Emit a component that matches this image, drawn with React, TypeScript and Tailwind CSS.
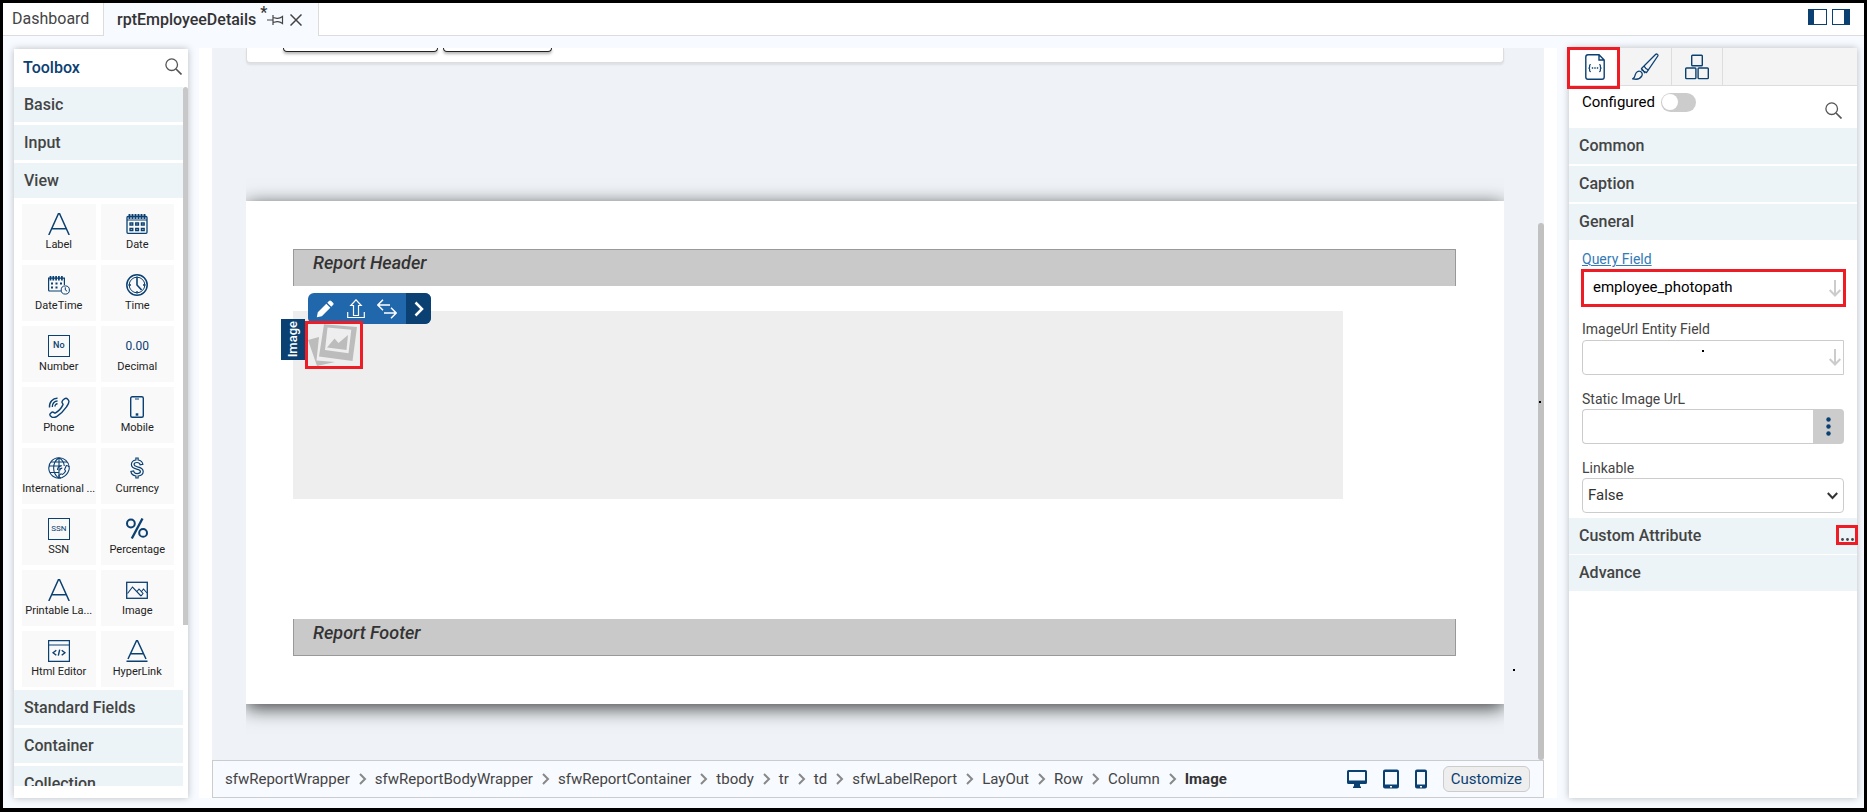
import { useState } from 'react'
import type { ReactNode } from 'react'

type Tool = { name: string; icon: ReactNode }

const svg = {
  width: 22,
  height: 22,
  viewBox: '0 0 22 22',
  fill: 'none',
  stroke: 'currentColor',
  strokeWidth: 1.3,
}

const LetterIcon = ({ underline = false }: { underline?: boolean }) => (
  <svg {...svg} strokeWidth={1.5}>
    {underline ? (
      <path d="M2 19 10.5.8h1L20 19M5 13.8h12M.5 21.3h21" />
    ) : (
      <path d="M.8 22 10.4.8h1.2L21.2 22M4 15.7h14" />
    )}
  </svg>
)

const DateIcon = () => (
  <svg {...svg}>
    <rect x="1" y="3.5" width="20" height="16.8" rx="1" />
    <path d="M1 7h20" strokeWidth="1" />
    <path d="M3.5 1v5M6.5 1v5M9.5 1v5M12.5 1v5M15.5 1v5M18.5 1v5" strokeWidth="1.9" />
    <path d="M4 10h2.8v2H4zM9.7 10h2.8v2H9.7zM15.4 10h2.8v2h-2.8zM4 15.5h2.8v2H4zM9.7 15.5h2.8v2H9.7zM15.4 15.5h2.8v2h-2.8z" />
  </svg>
)

const DateTimeIcon = () => (
  <svg {...svg} strokeWidth={1.2}>
    <path d="M13 17H1.6a1 1 0 0 1-1-1V4.2h15.8V11" />
    <path d="M2.5 2v4.4M5.3 2v4.4M8.1 2v4.4M10.9 2v4.4M13.9 2v4.4" strokeWidth="1.7" />
    <path d="M3 9.5h2M7.5 9.5h2M12 9.5h2M3 13.5h2M7.5 13.5h2" strokeWidth="2.2" />
    <circle cx="17.3" cy="16" r="4.1" strokeWidth="1" />
    <path d="M17.3 13.3V16l1.8 1.2" strokeWidth="1" />
  </svg>
)

const TimeIcon = () => (
  <svg {...svg}>
    <circle cx="11" cy="11" r="10.2" strokeWidth="1.5" />
    <circle cx="11" cy="11" r="7.8" strokeWidth="1" />
    <path d="M11 4.5V11l4.6 5" strokeWidth="1.6" />
    <path d="M11 2.5V5M11 17v2.5M2.5 11H5M17 11h2.5" />
  </svg>
)

const PhoneIcon = () => (
  <svg {...svg} strokeWidth={1.4}>
    <path d="M16.2 3 18 2.2c1 0 2.6 1.8 2.9 3 .3 2-1 3.600-2.400 5.600-2.500 3.500-5.500 7-9.500 9.500C7 21.500 5.500 22 4 21.200c-1-.6-2.300-1.600-2.200-2.600.1-1 1.900-2.600 2.900-2.600 1 0 1.700 1.300 2.500 1.100 3-1.700 6.200-5 7.800-8.500C15.300 7.700 13.800 7 14 6c.1-1 1.200-2.400 2.200-3z" />
    <path d="M1.500 11.500C1 6 5 2 9.500 2.200M4.300 11C4 7.500 6.500 5 9.500 5M7 10.500C6.800 9 8 7.900 9.500 7.800" />
  </svg>
)

const MobileIcon = () => (
  <svg {...svg} strokeWidth={1.4}>
    <rect x="4.700" y=".7" width="12.600" height="20.600" rx="1.500" />
    <path d="M9 3h4" strokeWidth="1" />
    <path d="M9.700 18.500h2.600" strokeWidth="2.400" />
  </svg>
)

const GlobeIcon = () => (
  <svg {...svg} strokeWidth={1.1}>
    <path d="M11 .8a10.200 10.200 0 1 0 2 20.200M11 .8A10.200 10.200 0 0 1 21.200 10" />
    <path d="M10.500 1C4 6 4 16 10.500 21M11.500 1c3 2 4.600 5 4.800 8M11 1v20M1 9h12M3 5h16M2 15.500h9" />
    <path d="M18.300 8.500c2.700 0 3.400 2 2.700 4.300-1 3.200-3.600 6.200-6.800 7.700-1.700.700-3.200-.2-3.400-1.800l2.200-1.900 1.600.6c1.400-.9 2.400-2 3-3.400l-1-1.500z" />
    <path d="M9.500 13c0-2.600 1.800-4.300 4.500-4.300M11.800 13.600c0-1.500 1-2.400 2.500-2.500" />
  </svg>
)

const CurrencyIcon = () => (
  <svg {...svg} strokeWidth={1.2}>
    <path d="M9.900 1h2.200v2c2.500.3 4.300 1.800 4.800 4.300l-2.700.5c-.4-1.500-1.500-2.300-3.200-2.300-1.800 0-2.900.8-2.900 2 0 1.300 1.200 1.700 3.500 2.300 3.500.8 5.600 2 5.600 4.700 0 2.400-2 4.100-5.100 4.500v2H9.900v-2c-2.800-.4-4.700-2-5-4.600l2.700-.4c.3 1.700 1.600 2.600 3.500 2.600s3.300-.7 3.300-2c0-1.400-1.300-1.800-3.800-2.400-3.200-.8-5.200-1.900-5.200-4.600 0-2.300 1.800-4.200 4.500-4.600z" />
  </svg>
)

const PercentIcon = () => (
  <svg {...svg} strokeWidth={2}>
    <circle cx="4.900" cy="5.500" r="3.900" />
    <circle cx="17.100" cy="14.900" r="3.900" />
    <path d="M16.500.5 5.800 20.500" strokeWidth="2.300" />
  </svg>
)

const ImageIcon = () => (
  <svg {...svg}>
    <rect x=".7" y="3.300" width="20.600" height="16" />
    <path d="M1.500 14.500 6.500 8l8.500 9M11 12.500l2-2.500 4 4.500-2 2.500M15.500 12.500l2-2.500 3.500 4" strokeWidth="1.100" />
  </svg>
)

const HtmlIcon = () => (
  <svg {...svg} strokeWidth={1.2}>
    <path d="M.6.6h20.800v20.800H.6zM.6 5h20.800" />
    <path d="m8.300 10.200-3.200 2.500 3.200 2.500M13.700 10.200l3.200 2.500-3.200 2.500M11.700 9.700l-1.400 6" strokeWidth="1.400" />
  </svg>
)

const Boxed = ({ children }: { children: ReactNode }) => (
  <span className="flex size-[22px] items-center justify-center border border-[#0b4072]">{children}</span>
)

const TOOLS: Tool[] = [
  { name: 'Label', icon: <LetterIcon /> },
  { name: 'Date', icon: <DateIcon /> },
  { name: 'DateTime', icon: <DateTimeIcon /> },
  { name: 'Time', icon: <TimeIcon /> },
  { name: 'Number', icon: <Boxed><span className="text-[9px] font-medium">No</span></Boxed> },
  { name: 'Decimal', icon: <span className="text-xs">0.00</span> },
  { name: 'Phone', icon: <PhoneIcon /> },
  { name: 'Mobile', icon: <MobileIcon /> },
  { name: 'International ...', icon: <GlobeIcon /> },
  { name: 'Currency', icon: <CurrencyIcon /> },
  { name: 'SSN', icon: <Boxed><span className="text-[8px]">SSN</span></Boxed> },
  { name: 'Percentage', icon: <PercentIcon /> },
  { name: 'Printable La...', icon: <LetterIcon /> },
  { name: 'Image', icon: <ImageIcon /> },
  { name: 'Html Editor', icon: <HtmlIcon /> },
  { name: 'HyperLink', icon: <LetterIcon underline /> },
]

const CRUMBS = ['sfwReportWrapper', 'sfwReportBodyWrapper', 'sfwReportContainer', 'tbody', 'tr', 'td', 'sfwLabelReport', 'LayOut', 'Row', 'Column', 'Image']

const SearchIcon = () => (
  <svg width="17" height="17" viewBox="0 0 17 17" fill="none" stroke="#555" strokeWidth="1.300">
    <circle cx="6.700" cy="6.700" r="5.800" />
    <path d="m11 11 5.500 5.500" strokeWidth="1.700" />
  </svg>
)

const DownArrow = () => (
  <svg width="12" height="17" viewBox="0 0 12 17" fill="none" stroke="#ccc" strokeWidth="2">
    <path d="M6 0v15.500M.7 10 6 15.500 11.300 10" />
  </svg>
)

function Section({ title, tall = false }: { title: string; tall?: boolean }) {
  return (
    <button className={(tall ? 'h-9' : 'h-[35px]') + ' block w-full shrink-0 bg-[#ecf4f8] px-[10px] text-left text-base font-medium text-[#444]'}>
      {title}
    </button>
  )
}

function TabBar() {
  return (
    <nav className="flex h-[33px] shrink-0 text-base">
      <a href="#dashboard" className="flex w-[101px] items-center border-b border-r border-[#dcdcdc] bg-white pl-[9px] text-[#444]">
        Dashboard
      </a>
      <div className="flex w-[214px] items-center pl-[13px] font-medium text-[#333]">
        <span>rptEmployeeDetails</span>
        <span className="ml-1 self-start leading-5">*</span>
        <button aria-label="Pin tab">
          <svg width="17" height="12" viewBox="0 0 17 12" fill="none" stroke="#444" strokeWidth="1.200">
            <path d="M0 6h6M6 1v10M6 3.500l4 .8c2 .2 3.500-.3 5.500-1.800v7c-2-1.500-3.500-2-5.500-1.800l-4 .8" />
          </svg>
        </button>
        <button aria-label="Close tab" className="ml-[6px]">
          <svg width="12" height="12" viewBox="0 0 12 12" stroke="#444" strokeWidth="1.500">
            <path d="m.5.5 11 11M11.500.5l-11 11" />
          </svg>
        </button>
      </div>
      <div className="flex flex-1 items-start justify-end gap-[5px] border-b border-l border-[#dcdcdc] bg-white pr-[14px] pt-[6px]">
        <button aria-label="Toggle left panel" className="h-4 w-[19px] border border-l-[6px] border-[#0b4072]" />
        <button aria-label="Toggle right panel" className="h-4 w-[18px] border border-r-[6px] border-[#0b4072]" />
      </div>
    </nav>
  )
}

function Toolbox() {
  return (
    <aside className="mt-px flex w-[174px] shrink-0 flex-col bg-white pb-3 shadow-[0_0_7px_rgba(0,0,0,0.25)]">
      <div className="flex h-[38px] shrink-0 items-center justify-between pl-[9px] pr-[6px]">
        <h2 className="text-base font-medium text-[#0b4072]">Toolbox</h2>
        <button aria-label="Search toolbox" className="pb-[3px]"><SearchIcon /></button>
      </div>
      <div className="flex min-h-0 flex-1">
        <div className="flex min-w-0 flex-1 flex-col gap-[3px] overflow-hidden">
          <Section title="Basic" />
          <Section title="Input" />
          <Section title="View" />
          <div className="grid shrink-0 grid-cols-2 gap-[5px] pl-2 pr-[9px] pt-[3px]">
            {TOOLS.map(tool => (
              <button key={tool.name} className="flex h-14 min-w-0 flex-col items-center bg-[#f9f9f9] pt-[9px] text-[#0b4072]">
                <span className="flex h-[22px] items-center">{tool.icon}</span>
                <span className="whitespace-nowrap text-[11px] leading-5 text-[#222]">{tool.name}</span>
              </button>
            ))}
          </div>
          <Section title="Standard Fields" />
          <Section title="Container" />
          <Section title="Collection" />
        </div>
        <div className="w-[5px]">
          <div className="h-[77%] rounded-t bg-[#c8c8c8]" />
        </div>
      </div>
    </aside>
  )
}

function SelectedImage() {
  return (
    <>
      <div className="absolute left-[15px] -top-[18px] z-10 flex h-[31px] overflow-hidden rounded-md bg-[#2167ab] text-white">
        <button aria-label="Edit" className="flex w-[34px] items-center justify-center">
          <svg width="18" height="18" viewBox="0 0 18 18" fill="currentColor">
            <path d="m.8 17.200 1-5 8.500-8.500 4 4-8.500 8.500zM11.300 2.700 13 1a1.500 1.500 0 0 1 2.200 0L17 2.800A1.500 1.500 0 0 1 17 5l-1.700 1.700z" />
          </svg>
        </button>
        <button aria-label="Move up" className="flex w-7 items-center justify-center">
          <svg width="18" height="20" viewBox="0 0 18 20" fill="none" stroke="currentColor" strokeWidth="1.200">
            <path d="M6.500 16.500V6.500H3.800L9 .8l5.200 5.700h-2.700v10zM.7 13v5.500h16.600V13" />
          </svg>
        </button>
        <button aria-label="Swap" className="flex w-9 items-center justify-center pr-[2px]">
          <svg width="20" height="20" viewBox="0 0 20 20" fill="none" stroke="currentColor" strokeWidth="1.500">
            <path d="M13 6H1M6 .8.8 6 6 11.200M7 14h12M14 8.800l5.200 5.200-5.200 5.200" />
          </svg>
        </button>
        <button aria-label="More" className="flex w-[25px] items-center justify-center bg-[#0b4072]">
          <svg width="10" height="16" viewBox="0 0 10 16" fill="none" stroke="currentColor" strokeWidth="2.500">
            <path d="m1.500 1.500 6.500 6.500-6.500 6.500" />
          </svg>
        </button>
      </div>
      <div className="absolute -left-3 top-2 flex h-[41px] w-6 items-center justify-center bg-[#0b4072]">
        <span className="rotate-180 text-[13px] font-medium text-white [writing-mode:vertical-rl]">Image</span>
      </div>
      <div className="absolute left-3 top-[10px] z-10 h-12 w-[58px] overflow-hidden border-[3px] border-[#ee1c25]">
        <svg width="50" height="42" viewBox="0 0 50 42" fill="#bcbcbc">
          <path d="m0 16 11-3-2.500 23.500L27 38 9 42z" />
          <path fillRule="evenodd" d="M16 .3 49 3l-4.500 34L11 32.500zM19.500 3.500 17 26l23.500 3.200 2.800-23.500z" />
          <path d="m19 23.500 7.500-9 4 4.500L40 11l-1.500 15z" />
        </svg>
      </div>
    </>
  )
}

function Canvas() {
  return (
    <div className="flex min-h-0 flex-1 bg-[#eff3f7]">
      <div className="flex min-w-0 flex-1 flex-col overflow-hidden px-[34px]">
        <div className="flex h-[15px] shrink-0 gap-[5px] rounded-b border border-t-0 border-[#ddd] bg-white pl-9 shadow-[0_2px_2px_rgba(0,0,0,0.08)]">
          <div className="h-1 w-[155px] rounded-b-[4px] border border-t-0 border-[#222] shadow-[0_2px_3px_rgba(0,0,0,0.3)]" />
          <div className="h-1 w-[109px] rounded-b-[4px] border border-t-0 border-[#222] shadow-[0_2px_3px_rgba(0,0,0,0.3)]" />
        </div>
        <div className="mt-[138px] flex shrink-0 flex-col bg-white pb-12 pl-[47px] pr-12 pt-12 shadow-[0_4px_18px_rgba(0,0,0,0.75)] [clip-path:inset(-30px_0)]">
          <div className="h-[37px] border border-b-0 border-[#999] bg-[#c9c9c9] pl-[19px] text-lg font-medium italic leading-[26px] text-[#333]">
            Report Header
          </div>
          <div className="relative mr-[113px] mt-[25px] h-[188px] bg-[#eee]">
            <SelectedImage />
          </div>
          <div className="mt-[120px] h-[37px] border border-t-0 border-[#999] bg-[#c9c9c9] pl-[19px] text-lg font-medium italic leading-7 text-[#333]">
            Report Footer
          </div>
        </div>
      </div>
      <div className="absolute right-[42px] top-[621px] size-[2px] bg-black" />
      <div className="absolute right-4 top-[353px] size-[2px] bg-black" />
      <div className="flex w-[6px] flex-col pt-[175px]">
        <div className="flex-1 rounded-md bg-[#c1c1c1]" />
      </div>
    </div>
  )
}

function StatusBar() {
  return (
    <footer className="flex h-[38px] shrink-0 items-center border border-[#ccc] bg-[#f7faff] pl-3 pr-[13px] text-[15px] text-[#444]">
      <ol className="flex flex-1 items-center">
        {CRUMBS.map((crumb, i) => (
          <li key={crumb} className="flex items-center">
            {i > 0 && (
              <svg className="mx-2" width="9" height="12" viewBox="0 0 9 12" fill="none" stroke="#888" strokeWidth="2">
                <path d="m2 1 5 5-5 5" />
              </svg>
            )}
            <a href={'#' + crumb} className={i === CRUMBS.length - 1 ? 'font-bold text-[#333]' : ''}>{crumb}</a>
          </li>
        ))}
      </ol>
      <div className="flex items-center gap-4 text-[#0b4072]">
        <button aria-label="Desktop">
          <svg width="20" height="20" viewBox="0 0 20 20" fill="currentColor">
            <path fillRule="evenodd" d="M1.500 1h17A1.500 1.500 0 0 1 20 2.500v11a1.500 1.500 0 0 1-1.500 1.500H13v2.500h1V19H6v-1.500h1V15H1.500A1.500 1.500 0 0 1 0 13.500v-11A1.500 1.500 0 0 1 1.500 1zM2 3v8.500h16V3z" />
          </svg>
        </button>
        <button aria-label="Tablet">
          <svg width="16" height="20" viewBox="0 0 16 20" fill="currentColor">
            <path fillRule="evenodd" d="M2 .5h12a2 2 0 0 1 2 2v15a2 2 0 0 1-2 2H2a2 2 0 0 1-2-2v-15a2 2 0 0 1 2-2zM2 3v12.500h12V3zm5 14v1.500h2V17z" />
          </svg>
        </button>
        <button aria-label="Phone">
          <svg width="12" height="20" viewBox="0 0 12 20" fill="currentColor">
            <path fillRule="evenodd" d="M2 .5h8a2 2 0 0 1 2 2v15a2 2 0 0 1-2 2H2a2 2 0 0 1-2-2v-15a2 2 0 0 1 2-2zM2 3v12.500h8V3zm3 14v1.500h2V17z" />
          </svg>
        </button>
        <button className="h-[26px] rounded-md border border-[#ccc] bg-[#eee] px-[7px] text-[15px] leading-6 text-[#0b4072]">
          Customize
        </button>
      </div>
    </footer>
  )
}

function Properties() {
  const [configured, setConfigured] = useState(false)
  const [queryField, setQueryField] = useState('employee_photopath')

  const box = 'block h-[35px] w-full border border-[#ccc] bg-white text-[15px]'
  const label = 'block text-sm leading-5 text-[#444]'

  return (
    <aside className="flex w-[288px] shrink-0 flex-col bg-white shadow-[0_0_7px_rgba(0,0,0,0.25)]">
      <div className="relative flex h-[38px] shrink-0 border-b border-[#ddd] bg-[#f4f4f4] text-[#0b4072]">
        <button aria-label="Properties" className="flex w-[51px] items-center justify-center bg-white">
          <svg width="20" height="26" viewBox="0 0 20 26" fill="none" stroke="currentColor" strokeWidth="1.400">
            <path d="M14 .8H3A2.200 2.200 0 0 0 .8 3v20A2.200 2.200 0 0 0 3 25.200h14a2.200 2.200 0 0 0 2.200-2.200V6zM14 .8V6h5.200" />
            <path d="M5.800 10.500c-1.600 0-1 1.700-1.200 2.700-.1.700-.6.900-1.100.9.500 0 1 .2 1.100.9.200 1-.4 2.700 1.200 2.700M14.200 10.500c1.600 0 1 1.700 1.200 2.700.1.700.6.900 1.100.9-.5 0-1 .2-1.100.9-.2 1 .4 2.700-1.200 2.700" strokeWidth="1.200" />
            <path d="M6.800 14h1.400M9.300 14h1.400M11.800 14h1.400" strokeWidth="1.500" />
          </svg>
        </button>
        <button aria-label="Style" className="flex w-[52px] items-center justify-center border-r border-[#ddd]">
          <svg width="27" height="27" viewBox="0 0 27 27" fill="none" stroke="currentColor" strokeWidth="1.300">
            <path d="M9.500 15.500 23.500 1.500c1-1 3-.2 2.300 1.500L14.500 19.500c-1.500-.3-4-2.500-5-4z" />
            <path d="M12 13c1 2 2.500 3.300 4.500 4M9 16.500c2 .8 3.300 2 4 3.700" />
            <path d="M8.500 18.500c1.800 1 2.200 3 1.200 4.700-1.700 3-6 3.300-9 2.600 2-.9 2.200-2.300 2.600-4.200.6-2.500 3-4.200 5.200-3.100z" />
          </svg>
        </button>
        <button aria-label="Controls" className="flex w-[51px] items-center justify-center border-r border-[#ddd]">
          <svg width="24" height="26" viewBox="0 0 24 26" fill="none" stroke="currentColor" strokeWidth="1.400">
            <rect x="6.700" y="1.200" width="10.600" height="10.600" rx=".8" />
            <rect x=".7" y="14" width="10.200" height="10.600" rx=".8" />
            <rect x="13.100" y="14" width="10.200" height="10.600" rx=".8" />
          </svg>
        </button>
        <div className="pointer-events-none absolute -left-[2px] -top-px h-[42px] w-[53px] border-[3px] border-[#ee1c25]" />
      </div>

      <div className="flex h-[42px] shrink-0 items-start justify-between pl-[13px] pr-[15px]">
        <label className="flex items-center gap-[6px] pt-[5px] text-[15px] text-black">
          Configured
          <input
            type="checkbox"
            checked={configured}
            onChange={e => setConfigured(e.target.checked)}
            className="h-[19px] w-[35px] appearance-none rounded-full bg-[#ccc] p-px before:block before:size-4 before:rounded-full before:bg-white checked:bg-[#2167ab] checked:before:ml-4"
          />
        </label>
        <button aria-label="Search properties" className="pt-4"><SearchIcon /></button>
      </div>

      <div className="flex flex-col gap-[2px]">
        <Section title="Common" tall />
        <Section title="Caption" tall />
        <Section title="General" tall />
      </div>

      <div className="flex flex-col pb-[5px] pl-[13px] pr-[13px] pt-[9px]">
        <label htmlFor="query" className="self-start text-sm leading-5 text-[#337ab7] underline">Query Field</label>
        <div className="relative -ml-px -mr-[2px] mb-3">
          <input
            id="query"
            value={queryField}
            onChange={e => setQueryField(e.target.value)}
            className="block h-[38px] w-full border-[3px] border-[#ee1c25] bg-white pb-[2px] pl-[9px] text-[15px] text-black"
          />
          <span className="pointer-events-none absolute right-[5px] top-[11px]"><DownArrow /></span>
        </div>

        <label htmlFor="entity" className={label}>ImageUrl Entity Field</label>
        <div className="relative mb-[14px] mt-px">
          <input id="entity" className={box + ' rounded-l'} />
          <span className="pointer-events-none absolute right-[3px] top-[9px]"><DownArrow /></span>
          <div className="absolute left-[120px] top-[10px] size-[2px] bg-black" />
        </div>

        <label htmlFor="static" className={label}>Static Image UrL</label>
        <div className="mb-[14px] flex">
          <input id="static" className={box + ' min-w-0 flex-1 rounded-l border-r-0'} />
          <button aria-label="Browse" className="flex w-[31px] items-center justify-center rounded-r bg-[#ccc]">
            <svg width="5" height="19" viewBox="0 0 5 19" fill="#0b4072">
              <circle cx="2.500" cy="2.500" r="2.200" />
              <circle cx="2.500" cy="9.500" r="2.200" />
              <circle cx="2.500" cy="16.500" r="2.200" />
            </svg>
          </button>
        </div>

        <label htmlFor="linkable" className={label}>Linkable</label>
        <div className="relative">
          <select id="linkable" className={box + ' appearance-none rounded pl-[5px] text-[#333]'}>
            <option>False</option>
            <option>True</option>
          </select>
          <svg className="pointer-events-none absolute right-[6px] top-[14px]" width="11" height="8" viewBox="0 0 11 8" fill="none" stroke="#333" strokeWidth="2">
            <path d="m.8 1 4.700 5 4.700-5" />
          </svg>
        </div>
      </div>

      <div className="flex flex-col gap-px">
        <div className="relative">
          <Section title="Custom Attribute" tall />
          <button aria-label="Custom attributes" className="absolute -right-px top-[7px] flex h-5 w-[22px] items-end justify-center border-[3px] border-[#ee1c25] pb-px">
            <svg width="13" height="3" viewBox="0 0 13 3" fill="#444">
              <circle cx="1.500" cy="1.500" r="1.400" />
              <circle cx="6.500" cy="1.500" r="1.400" />
              <circle cx="11.500" cy="1.500" r="1.400" />
            </svg>
          </button>
        </div>
        <Section title="Advance" tall />
      </div>
    </aside>
  )
}

export default function App() {
  return (
    <div className="mr-px flex h-screen min-h-[640px] flex-col overflow-hidden border-[3px] border-b-4 border-black bg-[#f7faff] font-['Roboto',sans-serif]">
      <TabBar />
      <div className="flex min-h-0 flex-1 gap-[11px] pb-[10px] pl-[11px] pr-[7px] pt-3">
        <Toolbox />
        <main className="relative mr-px flex min-w-0 flex-1 flex-col bg-white px-[13px]">
          <Canvas />
          <StatusBar />
        </main>
        <Properties />
      </div>
    </div>
  )
}
